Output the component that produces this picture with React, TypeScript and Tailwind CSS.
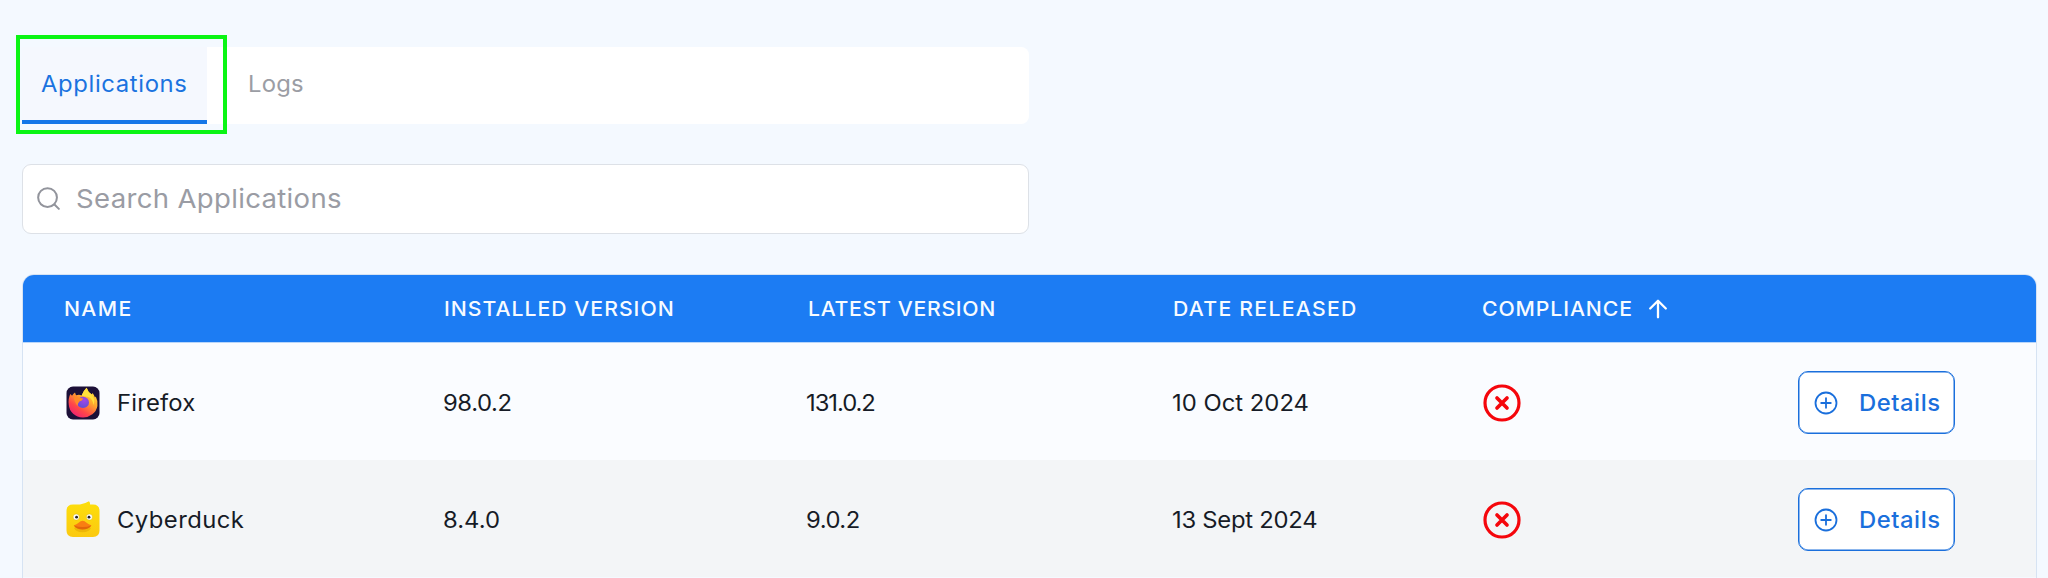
import React from "react";

const columns = [
  { label: "NAME", width: "w-[380px]", tracking: "tracking-[1.25px]" },
  { label: "INSTALLED VERSION", width: "w-[364px]", tracking: "tracking-[0.95px]" },
  { label: "LATEST VERSION", width: "w-[365px]", tracking: "tracking-[0.65px]" },
  { label: "DATE RELEASED", width: "w-[309px]", tracking: "tracking-[1.2px]" },
];

const rows = [
  {
    name: "Firefox", nameTracking: "tracking-[0.17px]", icon: <FirefoxIcon />,
    installed: "98.0.2", installedTracking: "tracking-[-0.4px]",
    latest: "131.0.2", latestTracking: "tracking-[-1px]",
    date: "10 Oct 2024", dateTracking: "tracking-[0px]", bg: "bg-[#fafcff]",
  },
  {
    name: "Cyberduck", nameTracking: "tracking-[0.4px]", icon: <DuckIcon />,
    installed: "8.4.0", installedTracking: "tracking-[0px]",
    latest: "9.0.2", latestTracking: "tracking-[-0.5px]",
    date: "13 Sept 2024", dateTracking: "tracking-[-0.26px]", bg: "bg-[#f3f5f7]",
  },
];

function FirefoxIcon() {
  return (
    <svg viewBox="0 0 34 38" className="h-[38px] w-[34px] shrink-0">
      <defs>
        <linearGradient id="fox" x1="0.85" y1="0.05" x2="0.25" y2="0.95">
          <stop offset="0" stopColor="#ffe33f" />
          <stop offset="0.4" stopColor="#ffa52e" />
          <stop offset="0.75" stopColor="#ff4649" />
          <stop offset="1" stopColor="#f0256e" />
        </linearGradient>
        <radialGradient id="globe" cx="0.6" cy="0.3" r="0.75">
          <stop offset="0" stopColor="#a445e6" />
          <stop offset="1" stopColor="#5b4fd6" />
        </radialGradient>
      </defs>
      <rect x="0.5" y="2.5" width="33" height="33" rx="6.5" fill="#1c1038" />
      <path d="M4.4 10 Q5.6 11 6 11.8 Q7.6 9.2 9 8.4 L10 11.2 Q13.5 10.4 15.6 11.4 Q17 7.4 20.6 3.8 Q21.8 8 25.8 10.6 L26.6 9 Q28.4 11.5 29 13.6 L29.8 12.4 Q32.2 17 31.4 22 A14.4 13.4 0 0 1 2.8 21 Q1.9 14.5 4.4 10Z" fill="url(#fox)" />
      <ellipse cx="17" cy="18.4" rx="6" ry="5.6" fill="url(#globe)" />
      <path d="M8 12 Q11.6 12.4 12.7 13.8 L17.2 14.6 Q16.4 17 13.4 17.6 Q11.7 19.2 11.6 22 Q7.6 17 8 12Z" fill="#ff8a28" />
      <path d="M20.6 3.8 Q21.8 8 25.8 10.6 Q29.6 16 27.6 21 Q26.6 15 22.6 13 Q19 12.4 15.6 11.4 Q17 7.4 20.6 3.8Z" fill="#ffdf3c" />
    </svg>
  );
}

function DuckIcon() {
  return (
    <svg viewBox="0 0 34 38" className="h-[38px] w-[34px] shrink-0">
      <defs>
        <linearGradient id="duck" x1="0" y1="0" x2="0" y2="1">
          <stop offset="0" stopColor="#fddf0b" />
          <stop offset="1" stopColor="#fbc910" />
        </linearGradient>
      </defs>
      <path d="M7 3.5 H14 Q18.5 2.8 23 0.2 Q24.4 1.6 24 3.5 H27 Q33.5 3.5 33.5 10 V29.5 Q33.5 36 27 36 H7 Q0.5 36 0.5 29.5 V10 Q0.5 3.5 7 3.5Z" fill="url(#duck)" />
      <ellipse cx="16.5" cy="27.2" rx="8" ry="4" fill="#e0a000" opacity="0.5" />
      <circle cx="10.2" cy="16" r="3.1" fill="#fff" stroke="#d9b40a" strokeWidth="0.5" />
      <circle cx="23.4" cy="16" r="3.1" fill="#fff" stroke="#d9b40a" strokeWidth="0.5" />
      <circle cx="10.6" cy="16.2" r="1.4" fill="#222" />
      <circle cx="23" cy="16.2" r="1.4" fill="#222" />
      <path d="M16.6 19.8 Q18.8 20 20.2 21.6 Q22 23.4 25.4 24.4 Q22.4 28.2 16.6 28.2 Q10.8 28.2 7.8 24.4 Q11.2 23.4 13 21.6 Q14.4 20 16.6 19.8Z" fill="#f97e12" />
      <path d="M7.8 24.4 Q12 26 16.6 26 Q21.2 26 25.4 24.4 Q22.4 28.4 16.6 28.4 Q10.8 28.4 7.8 24.4Z" fill="#e2660a" />
    </svg>
  );
}

function FailIcon() {
  return (
    <svg viewBox="0 0 38 38" className="size-[38px]" fill="none" stroke="#f5060c" strokeLinecap="round">
      <circle cx="19" cy="19" r="17" strokeWidth="3.2" />
      <path d="M14 14 L24 24 M24 14 L14 24" strokeWidth="3.7" />
    </svg>
  );
}

function PlusCircle() {
  return (
    <svg viewBox="0 0 24 24" className="size-6" fill="none" stroke="#1a6fdc" strokeWidth="1.8" strokeLinecap="round">
      <circle cx="12" cy="12" r="10.5" />
      <path d="M12 7.2 V16.8 M7.2 12 H16.8" />
    </svg>
  );
}

function Text({ children, className = "" }: { children: React.ReactNode; className?: string }) {
  return (
    <span className={`inline-block origin-left scale-x-[1.06] whitespace-nowrap ${className}`}>{children}</span>
  );
}

export default function App() {
  return (
    <div className="flex h-[578px] flex-col overflow-hidden bg-[#f4f9ff] pl-[22px] pr-[11px] pt-[47px] font-['Inter',sans-serif]">
      <div className="relative h-[77px] w-[1007px] shrink-0 rounded-[8px] bg-white">
        <div className="flex h-full text-[22.5px]">
          <div className="flex w-[185px] items-center border-b-[4px] border-[#1477e8] bg-[#f5f8fe] pl-[19px] text-[#1a73e0]">
            <Text className="tracking-[0.59px]">Applications</Text>
          </div>
          <div className="flex items-center pb-[4px] pl-[41px] text-[#9b9da4]">
            <Text className="tracking-[0.2px]">Logs</Text>
          </div>
        </div>
        <div className="absolute -left-[6px] -top-[12px] h-[99px] w-[211px] border-[4px] border-[#0bf514]" />
      </div>

      <div className="mt-[40px] flex h-[70px] w-[1007px] shrink-0 items-center rounded-[9px] border border-[#dde1e7] bg-white pb-px pl-[14px] text-[26px] text-[#9a9ca4]">
        <svg viewBox="0 0 24 24" className="size-[23px]" fill="none" stroke="#92949c" strokeWidth="2.1" strokeLinecap="round">
          <circle cx="11" cy="11" r="9.8" />
          <path d="M18.2 18.2 L22.8 22.8" />
        </svg>
        <Text className="ml-[16px] tracking-[0.3px]">Search Applications</Text>
      </div>

      <div className="mt-[40px] flex h-[320px] shrink-0 flex-col overflow-hidden rounded-t-[12px] border border-[#d6e3f3]">
        <div className="flex h-[68px] shrink-0 items-center border-b border-[#b9d6fa] bg-[#1c7cf3] pl-[41px] text-[20px] font-medium text-[#f7fbff]">
          {columns.map((c) => (
            <div key={c.label} className={c.width}>
              <Text className={c.tracking}>{c.label}</Text>
            </div>
          ))}
          <div className="w-[166px]">
            <Text className="tracking-[0.85px]">COMPLIANCE</Text>
          </div>
          <svg viewBox="0 0 20 20" className="size-5" fill="none" stroke="#fff" strokeWidth="2.3" strokeLinecap="round" strokeLinejoin="round">
            <path d="M10 18.3 V2 M2.2 9.5 L10 1.8 L17.8 9.5" />
          </svg>
        </div>
        {rows.map((r) => (
          <div key={r.name} className={`flex h-[117px] shrink-0 items-center pl-[43px] pt-[2px] text-[22.5px] text-[#161b26] ${r.bg}`}>
            <div className="flex w-[377px] items-center gap-[17px]">
              {r.icon}
              <Text className={r.nameTracking}>{r.name}</Text>
            </div>
            <div className="w-[363px]"><Text className={r.installedTracking}>{r.installed}</Text></div>
            <div className="w-[366px]"><Text className={r.latestTracking}>{r.latest}</Text></div>
            <div className="w-[311px]"><Text className={r.dateTracking}>{r.date}</Text></div>
            <div className="w-[315px]"><FailIcon /></div>
            <button className="flex h-[63px] w-[157px] items-center rounded-[10px] border-[1.5px] border-[#1a6fdc] bg-white pl-[15px] font-medium text-[#1a6fdc] shadow-[inset_0_0_0_0.5px_#1a6fdc]">
              <PlusCircle />
              <Text className="ml-[21px] tracking-[0.5px]">Details</Text>
            </button>
          </div>
        ))}
      </div>
    </div>
  );
}
